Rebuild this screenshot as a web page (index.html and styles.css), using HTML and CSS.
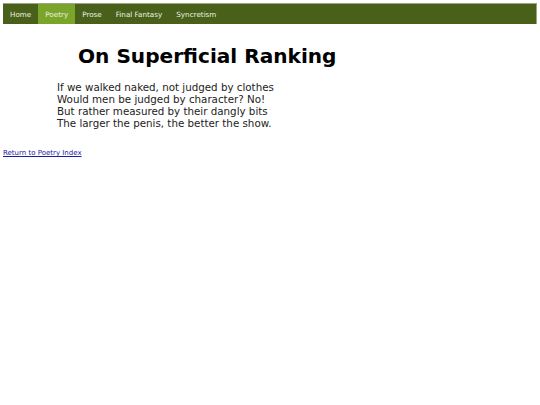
FILE: index.html
```html
<!DOCTYPE html>
<html>
<head>
<meta charset="utf-8">
<link rel="stylesheet" href="styles.css">
</head>
<body>
<div class="nav">
  <a class="tab" href="#">Home</a>
  <a class="tab active" href="#">Poetry</a>
  <a class="tab" href="#">Prose</a>
  <a class="tab" href="#">Final Fantasy</a>
  <a class="tab" href="#">Syncretism</a>
</div>
<div class="content">
  <h1 class="title">On Superficial Ranking</h1>
  <div class="poem">
    If we walked naked, not judged by clothes<br>
    Would men be judged by character? No!<br>
    But rather measured by their dangly bits<br>
    The larger the penis, the better the show.
  </div>
</div>
<a class="back" href="#">Return to Poetry Index</a>
</body>
</html>
```
FILE: styles.css
```css
html, body { margin: 0; padding: 0; background: #fff; }
body { padding: 3px; font-family: "DejaVu Sans", Verdana, sans-serif; }
.nav {
  display: flex;
  width: 533px;
  height: 20px;
  background: #48601a;
  border-top: 1px solid #9aa57e;
  border-right: 1px solid #9aa57e;
}
.tab {
  display: flex;
  align-items: center;
  padding: 0 7px;
  color: #eef2e2;
  font-size: 7.2px;
  text-decoration: none;
}
.tab.active { background: #7aa52a; }
.content { padding-left: 54px; }
.title {
  margin: 19px 0 0 21px;
  font-size: 20.1px;
  font-weight: bold;
  color: #000;
  line-height: 26px;
}
.poem {
  margin-top: 12px;
  font-size: 10.3px;
  line-height: 12px;
  color: #222;
}
.back {
  display: inline-block;
  margin-top: 20px;
  font-size: 7px;
  color: #1a1aa8;
}
```
